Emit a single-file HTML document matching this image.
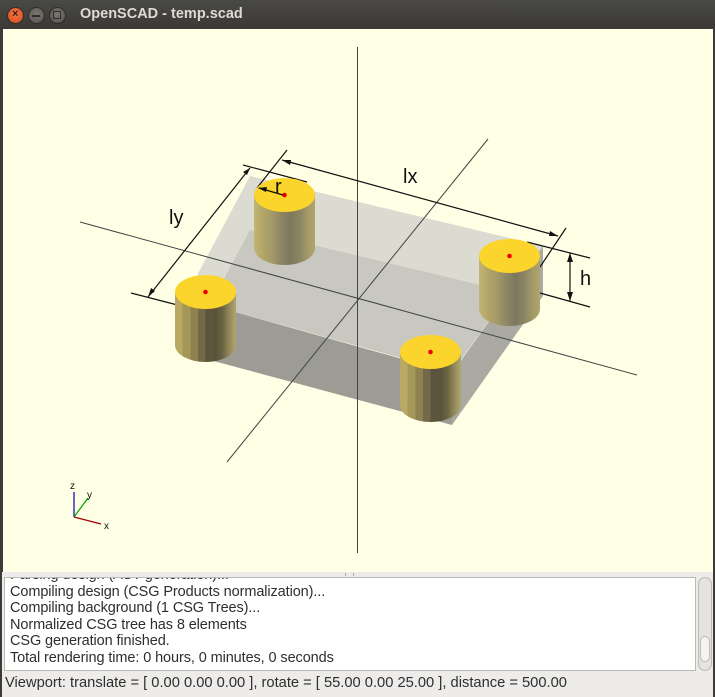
<!DOCTYPE html>
<html><head><meta charset="utf-8"><style>
*{margin:0;padding:0;box-sizing:border-box}
body{width:715px;height:697px;overflow:hidden;background:#3c3b37;font-family:"Liberation Sans",sans-serif;position:relative}
#title{position:absolute;left:0;top:0;width:715px;height:29px;background:linear-gradient(#4a4945,#3a3935);}
#title .t{position:absolute;left:80px;top:6px;color:#dfdbd2;font-weight:bold;font-size:14.5px}
.btn{position:absolute;top:7px;width:17px;height:17px;border-radius:50%;border:1px solid #2e2d2a}
#vp{position:absolute;left:3px;top:29px;width:710px;height:543px;background:#ffffe6}
#bottom{position:absolute;left:2px;top:572px;width:711px;height:125px;background:#edecea}
#log{position:absolute;left:2px;top:5px;width:692px;height:94px;background:#fff;border:1px solid #bcbab5;overflow:hidden;font-size:14.5px;color:#2e2e2e;line-height:16.6px;padding-left:5px;letter-spacing:-0.1px}
#sb{position:absolute;left:696px;top:5px;width:14px;height:94px;border:1px solid #bcbab5;border-radius:7px;background:#e4e3e0}
#status{position:absolute;left:3px;top:103px;font-size:14.7px;color:#2e2e2e;white-space:nowrap}
</style></head><body>
<div id="title">
<div class="btn" style="left:7px;background:radial-gradient(circle at 50% 40%,#f07a4a,#d8461a)"></div>
<div class="btn" style="left:28px;background:radial-gradient(circle at 50% 40%,#77766f,#55544f)"></div>
<div class="btn" style="left:49px;background:radial-gradient(circle at 50% 40%,#77766f,#55544f)"></div>
<div style="position:absolute;left:12px;top:8px;color:#3a1a0a;font-size:11px;font-weight:bold">×</div>
<div style="position:absolute;left:32px;top:15px;width:8px;height:2px;background:#2e2d2a"></div>
<div style="position:absolute;left:53px;top:11px;width:8px;height:8px;border:1px solid #2e2d2a"></div>
<div class="t">OpenSCAD - temp.scad</div>
</div>
<div id="vp">
<svg width="710" height="543" viewBox="3 29 710 543" xmlns="http://www.w3.org/2000/svg" style="position:absolute;left:0;top:0">
<defs>
<clipPath id="topc"><polygon points="250,176 543,246 452,372 185,298"/></clipPath>
<linearGradient id="g1" x1="0" x2="1" y1="0" y2="0">
<stop offset="0" stop-color="#b9a963"/><stop offset=".12" stop-color="#b9a963"/><stop offset=".12" stop-color="#a59758"/><stop offset=".25" stop-color="#a59758"/><stop offset=".25" stop-color="#8e8250"/><stop offset=".38" stop-color="#8e8250"/><stop offset=".38" stop-color="#73694a"/><stop offset=".5" stop-color="#73694a"/><stop offset=".5" stop-color="#5c553c"/><stop offset=".65" stop-color="#5c553c"/><stop offset=".65" stop-color="#555039"/><stop offset=".78" stop-color="#6c6443"/><stop offset=".88" stop-color="#8f8658"/><stop offset="1" stop-color="#b0a770"/></linearGradient>
<linearGradient id="g2" x1="0" x2="1" y1="0" y2="0">
<stop offset="0" stop-color="#c3b574"/><stop offset=".15" stop-color="#b2a566"/><stop offset=".3" stop-color="#a3996b"/><stop offset=".45" stop-color="#8e8663"/><stop offset=".6" stop-color="#7d775e"/><stop offset=".75" stop-color="#8c8563"/><stop offset=".88" stop-color="#a49a68"/><stop offset="1" stop-color="#b0a56c"/></linearGradient>
</defs>
<polygon points="250,176 543,246 452,372 185,298" fill="#dbdbd1"/>
<g clip-path="url(#topc)"><polygon points="250,230 543,300 452,426 185,352" fill="#c8c8c0"/></g>
<polygon points="185,298 452,373 452,425 180,352" fill="#9c9c95"/>
<polygon points="452,373 543,246 543,296 452,425" fill="#aaaaa2"/>
<g stroke="#444" stroke-width="1" fill="none">
<line x1="357.5" y1="47" x2="357.5" y2="553"/>
<line x1="80" y1="222" x2="637" y2="375"/>
<line x1="227" y1="462" x2="488" y2="139"/>
</g>
<g stroke="#111" stroke-width="1.2" fill="none">
<line x1="148" y1="297" x2="250" y2="168"/>
<line x1="243" y1="165" x2="307" y2="182"/>
<line x1="131" y1="293" x2="193" y2="309"/>
<line x1="282" y1="160" x2="558" y2="236"/>
<line x1="287" y1="150" x2="257" y2="188"/>
<line x1="566" y1="228" x2="540" y2="267"/>
<line x1="570" y1="253" x2="570" y2="301"/>
<line x1="527" y1="242" x2="590" y2="258"/>
<line x1="540" y1="293" x2="590" y2="307"/>
</g>
<g fill="#111">
<polygon points="250,168 243,172 247,175"/><polygon points="148,297 151,288 155,291"/>
<polygon points="282,160 291,160 290,165"/><polygon points="558,236 549,236 550,231"/>
<polygon points="570,253 567,262 573,262"/><polygon points="570,301 567,292 573,292"/>
</g>
<g>
<path d="M254,195 L254,248 A30.5,17 0 0 0 315,248 L315,195 Z" fill="url(#g2)"/>
<ellipse cx="284.5" cy="195" rx="30.5" ry="17" fill="#fbd52b"/>
<path d="M175,292 L175,345 A30.5,17 0 0 0 236,345 L236,292 Z" fill="url(#g1)"/>
<ellipse cx="205.5" cy="292" rx="30.5" ry="17" fill="#fbd52b"/>
<path d="M479,256 L479,309 A30.5,17 0 0 0 540,309 L540,256 Z" fill="url(#g2)"/>
<ellipse cx="509.5" cy="256" rx="30.5" ry="17" fill="#fbd52b"/>
<path d="M400,352 L400,405 A30.5,17 0 0 0 461,405 L461,352 Z" fill="url(#g1)"/>
<ellipse cx="430.5" cy="352" rx="30.5" ry="17" fill="#fbd52b"/>
<g fill="#e00"><circle cx="284.5" cy="195" r="2.3"/><circle cx="205.5" cy="292" r="2.3"/><circle cx="509.5" cy="256" r="2.3"/><circle cx="430.5" cy="352" r="2.3"/></g>
</g>
<line x1="259" y1="188" x2="283" y2="195" stroke="#111" stroke-width="1.2"/>
<polygon points="258,188 267,187 266,192" fill="#111"/>
<g font-family="Liberation Sans,sans-serif" font-size="20" fill="#111">
<text x="169" y="224">ly</text><text x="403" y="183">lx</text><text x="275" y="193">r</text><text x="580" y="285">h</text>
</g>
<line x1="74" y1="517" x2="74" y2="492" stroke="#0000b0" stroke-width="1.2"/>
<line x1="74" y1="517" x2="88" y2="498" stroke="#00a000" stroke-width="1.2"/>
<line x1="74" y1="517" x2="101" y2="524" stroke="#a00000" stroke-width="1.2"/>
<g font-family="Liberation Sans,sans-serif" font-size="10" fill="#111">
<text x="70" y="489">z</text><text x="87" y="498">y</text><text x="104" y="529">x</text></g>
</svg>
</div>
<div id="bottom">
<div style="position:absolute;left:343px;top:1px;width:9px;height:3px;border-left:1px solid #aaa;border-right:1px solid #aaa"></div>
<div id="log">
<div style="margin-top:-11px">Parsing design (AST generation)...</div>
<div>Compiling design (CSG Products normalization)...</div>
<div>Compiling background (1 CSG Trees)...</div>
<div>Normalized CSG tree has 8 elements</div>
<div>CSG generation finished.</div>
<div>Total rendering time: 0 hours, 0 minutes, 0 seconds</div>
</div>
<div id="sb"><div style="position:absolute;left:1px;top:58px;width:10px;height:26px;border:1px solid #bcbab5;border-radius:5px;background:#f4f3f1"></div></div>
<div id="status">Viewport: translate = [ 0.00 0.00 0.00 ], rotate = [ 55.00 0.00 25.00 ], distance = 500.00</div>
</div>
</body></html>
